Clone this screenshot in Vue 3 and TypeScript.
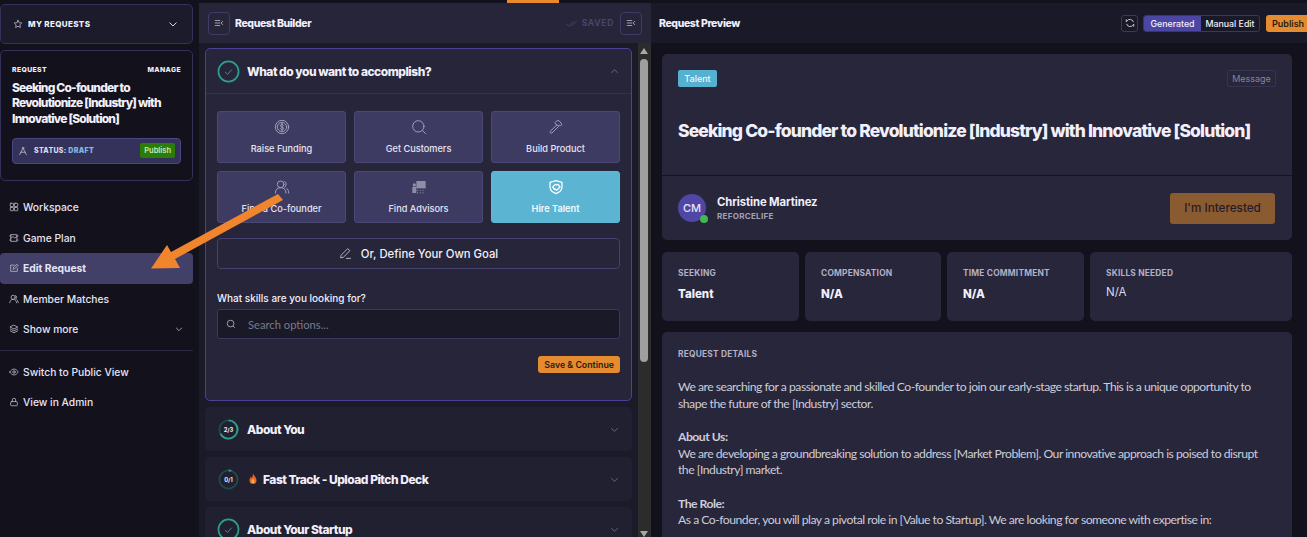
<script setup lang="ts">
const goals = [
  { label: 'Raise Funding', icon: 'dollar' },
  { label: 'Get Customers', icon: 'search' },
  { label: 'Build Product', icon: 'hammer' },
  { label: 'Find a Co-founder', icon: 'users' },
  { label: 'Find Advisors', icon: 'board' },
  { label: 'Hire Talent', icon: 'shake', active: true },
];

const navTop = [
  { label: 'Workspace', icon: 'grid' },
  { label: 'Game Plan', icon: 'map' },
  { label: 'Edit Request', icon: 'edit', active: true },
  { label: 'Member Matches', icon: 'user' },
  { label: 'Show more', icon: 'layers', more: true },
];

const navBottom = [
  { label: 'Switch to Public View', icon: 'eye' },
  { label: 'View in Admin', icon: 'lock' },
];

const stats = [
  { label: 'SEEKING', value: 'Talent' },
  { label: 'COMPENSATION', value: 'N/A' },
  { label: 'TIME COMMITMENT', value: 'N/A' },
  { label: 'SKILLS NEEDED', value: 'N/A', plain: true },
];

const circumference = 2 * Math.PI * 9.5;
function ringDash(done: number, total: number) {
  return `${(done / total) * circumference} ${circumference}`;
}
</script>

<template>
  <div class="app">
    <div class="top-mark"></div>

    <aside class="sidebar">
      <div class="my-requests">
        <svg class="ico star" viewBox="0 0 24 24"><path d="M12 3l2.8 5.8 6.2.9-4.5 4.4 1.1 6.3L12 17.4l-5.6 3 1.1-6.3L3 9.700l6.200-.9z" /></svg>
        <span>MY REQUESTS</span>
        <svg class="chev-lg" viewBox="0 0 24 24"><path d="M5 9l7 7 7-7" /></svg>
      </div>

      <div class="request-box">
        <div class="request-top"><span>REQUEST</span><span>MANAGE</span></div>
        <div class="request-title">Seeking Co-founder to Revolutionize [Industry] with Innovative [Solution]</div>
        <div class="status">
          <svg class="ico status-ico" viewBox="0 0 24 24"><circle cx="12" cy="5" r="2" /><path d="M11 7L4 21M13 7l7 14M6 15h12" /></svg>
          <span class="status-text">STATUS: <b>DRAFT</b></span>
          <span class="publish-small">Publish</span>
        </div>
      </div>

      <nav class="nav">
        <div v-for="item in navTop" :key="item.label" class="nav-item" :class="{ active: item.active }">
          <svg class="ico" viewBox="0 0 24 24">
            <template v-if="item.icon === 'grid'">
              <rect x="3" y="3" width="8" height="8" rx="1.500" /><rect x="13" y="3" width="8" height="8" rx="1.500" /><rect x="3" y="13" width="8" height="8" rx="1.500" /><rect x="13" y="13" width="8" height="8" rx="1.500" />
            </template>
            <template v-else-if="item.icon === 'map'">
              <path d="M5 4h14v16H5zM2 7h3M2 17h3M19 7h3M19 17h3M5 12l5-3 4 3 5-3" />
            </template>
            <template v-else-if="item.icon === 'edit'">
              <path d="M20 13v7H4V5h8M10 14l1-4 8-7 3 3-8 7z" />
            </template>
            <template v-else-if="item.icon === 'user'">
              <circle cx="10" cy="8" r="5" /><path d="M2 21c0-5 3-8 8-8s8 3 8 8M16 3.500c3 1 3 7 0 9M19 14c2 1 3 4 3 7" />
            </template>
            <template v-else>
              <path d="M12 3l9 4.500-9 4.500-9-4.500zM3 12l9 4.500 9-4.500M3 16.500l9 4.500 9-4.500" />
            </template>
          </svg>
          <span>{{ item.label }}</span>
          <svg v-if="item.more" class="chev-nav" viewBox="0 0 24 24"><path d="M5 9l7 7 7-7" /></svg>
        </div>
        <div class="nav-sep"></div>
        <div v-for="item in navBottom" :key="item.label" class="nav-item">
          <svg class="ico" viewBox="0 0 24 24">
            <template v-if="item.icon === 'eye'">
              <path d="M2 12c3-5 6-7 10-7s7 2 10 7c-3 5-6 7-10 7s-7-2-10-7z" /><circle cx="12" cy="12" r="3" />
            </template>
            <template v-else>
              <rect x="4" y="11" width="16" height="10" rx="2" /><path d="M8 11V7a4 4 0 0 1 8 0v4" />
            </template>
          </svg>
          <span>{{ item.label }}</span>
        </div>
      </nav>
    </aside>

    <section class="builder">
      <header class="builder-head">
        <span class="square-btn">
          <svg class="ico" viewBox="0 0 24 24"><path d="M3 6h11M3 12h11M3 18h11M21 8l-4 4 4 4" /></svg>
        </span>
        <span class="head-title">Request Builder</span>
        <span class="saved">
          <svg class="saved-ico" viewBox="0 0 24 24"><path d="M1 13l5 5L17 7M12 18L23 7" /></svg>
          SAVED
        </span>
        <span class="square-btn">
          <svg class="ico" viewBox="0 0 24 24"><path d="M3 6h11M3 12h11M3 18h11M21 8l-4 4 4 4" /></svg>
        </span>
      </header>

      <div class="builder-body">
        <div class="builder-scroll">
          <div class="acc open">
            <div class="acc-head first">
              <svg class="ring" viewBox="0 0 24 24">
                <circle cx="12" cy="12" r="10.500" class="ring-full" />
                <path d="M8.500 12.500l2.500 2.500 4.500-5" class="ring-check" />
              </svg>
              <span class="acc-title">What do you want to accomplish?</span>
              <svg class="chev-acc" viewBox="0 0 24 24"><path d="M5 15l7-7 7 7" /></svg>
            </div>
            <div class="acc-body">
              <div class="goals">
                <div v-for="goal in goals" :key="goal.label" class="goal" :class="{ active: goal.active }">
                  <svg class="goal-ico" viewBox="0 0 24 24">
                    <template v-if="goal.icon === 'dollar'">
                      <circle cx="12" cy="12" r="10" /><circle cx="12" cy="12" r="7" /><path d="M14.500 9.500c-.5-1-1.500-1.500-2.500-1.500-1.500 0-2.500.8-2.500 2s1 1.700 2.500 2 2.500.8 2.500 2-1 2-2.500 2c-1 0-2-.5-2.500-1.500M12 6.500v11" />
                    </template>
                    <template v-else-if="goal.icon === 'search'">
                      <circle cx="11" cy="11" r="8.500" /><path d="M17.500 17.500L22 22" />
                    </template>
                    <template v-else-if="goal.icon === 'hammer'">
                      <path d="M13 9L3.500 18.500a1.800 1.800 0 0 0 2.500 2.500L15.500 11.500M11 5l3-3 3 1 4 5-2 2-2-1-1 2-5-4z" />
                    </template>
                    <template v-else-if="goal.icon === 'users'">
                      <circle cx="10" cy="8" r="5" /><path d="M2 21c0-5 3-8 8-8s8 3 8 8M16 3.500c3 1 3 7 0 9M19 14c2 1 3 4 3 7" />
                    </template>
                    <template v-else-if="goal.icon === 'board'">
                      <rect class="fill" x="8" y="3" width="14" height="11" /><circle class="fill" cx="5" cy="9" r="2.500" /><rect class="fill" x="2" y="12" width="6" height="9" />
                      <path class="dots" d="M10 17v.5M14 17v.5M18 17v.5M10 20.500v.5M14 20.500v.5M18 20.500v.5" />
                    </template>
                    <template v-else>
                      <path d="M12 2.500l9 2.500v7c0 5-4 8-9 10-5-2-9-5-9-10V5z" /><path d="M7 12l4-4 2 1 2-1 3 4-5 5-2-2-1 1z" />
                    </template>
                  </svg>
                  <span>{{ goal.label }}</span>
                </div>
              </div>
              <div class="define">
                <svg class="define-ico" viewBox="0 0 24 24"><path d="M3 20l1-5L16 3l4 4L8 19zM13 21h9" /></svg>
                Or, Define Your Own Goal
              </div>
              <div class="skills-label">What skills are you looking for?</div>
              <div class="search">
                <svg class="search-ico" viewBox="0 0 24 24"><circle cx="11" cy="11" r="8" /><path d="M17 17l4 4" /></svg>
                <span>Search options...</span>
              </div>
              <div class="save-row"><span class="save-btn">Save &amp; Continue</span></div>
            </div>
          </div>

          <div class="acc">
            <div class="acc-head">
              <svg class="ring" viewBox="0 0 24 24">
                <circle cx="12" cy="12" r="9.500" class="ring-track" />
                <circle cx="12" cy="12" r="9.500" class="ring-value" :stroke-dasharray="ringDash(2, 3)" transform="rotate(-90 12 12)" />
                <text x="12" y="14.300" class="ring-text">2/3</text>
              </svg>
              <span class="acc-title">About You</span>
              <svg class="chev-acc" viewBox="0 0 24 24"><path d="M5 9l7 7 7-7" /></svg>
            </div>
          </div>
          <div class="acc">
            <div class="acc-head">
              <svg class="ring" viewBox="0 0 24 24">
                <circle cx="12" cy="12" r="9.500" class="ring-track" />
                <circle cx="12" cy="12" r="9.500" class="ring-value" :stroke-dasharray="`3 ${circumference}`" transform="rotate(-90 12 12)" />
                <text x="12" y="14.300" class="ring-text">0/1</text>
              </svg>
              <svg class="flame" viewBox="0 0 24 24">
                <path d="M12 1c1 4 7 7 7 14a7 7 0 0 1-14 0c0-4 2-6 3-8 1 2 1 3 2 3 1-3 2-6 2-9z" fill="#e8672a" />
                <path d="M12 11c1 2 3 3 3 6a3 3 0 0 1-6 0c0-2 2-4 3-6z" fill="#f6b24a" />
              </svg>
              <span class="acc-title">Fast Track - Upload Pitch Deck</span>
              <svg class="chev-acc" viewBox="0 0 24 24"><path d="M5 9l7 7 7-7" /></svg>
            </div>
          </div>
          <div class="acc">
            <div class="acc-head">
              <svg class="ring" viewBox="0 0 24 24">
                <circle cx="12" cy="12" r="10.500" class="ring-full" />
                <path d="M8.500 12.500l2.500 2.500 4.500-5" class="ring-check" />
              </svg>
              <span class="acc-title">About Your Startup</span>
              <svg class="chev-acc" viewBox="0 0 24 24"><path d="M5 9l7 7 7-7" /></svg>
            </div>
          </div>
        </div>

        <div class="scrollbar">
          <span class="arrow-up"></span>
          <span class="thumb"></span>
          <span class="arrow-down"></span>
        </div>
      </div>
    </section>

    <section class="preview">
      <header class="preview-head">
        <span class="head-title">Request Preview</span>
        <span class="refresh">
          <svg class="ico" viewBox="0 0 24 24"><path d="M20 9a8.500 8.500 0 0 0-15-2L3 9V4M4 15a8.500 8.500 0 0 0 15 2l2-2v5" /></svg>
        </span>
        <span class="segment">
          <span class="seg on">Generated</span>
          <span class="seg">Manual Edit</span>
        </span>
        <span class="publish">Publish</span>
      </header>

      <div class="preview-body">
        <div class="preview-scroll">
          <div class="card hero">
            <div class="hero-main">
              <div class="hero-top">
                <span class="chip">Talent</span>
                <span class="message">Message</span>
              </div>
              <h1 class="hero-title">Seeking Co-founder to Revolutionize [Industry] with Innovative [Solution]</h1>
            </div>
            <div class="hero-foot">
              <span class="avatar">CM<i class="online"></i></span>
              <span class="who">
                <span class="who-name">Christine Martinez</span>
                <span class="who-org">REFORCELIFE</span>
              </span>
              <span class="interested">I'm Interested</span>
            </div>
          </div>

          <div class="stats">
            <div v-for="stat in stats" :key="stat.label" class="card stat">
              <span class="stat-label">{{ stat.label }}</span>
              <span class="stat-value" :class="{ plain: stat.plain }">{{ stat.value }}</span>
            </div>
          </div>

          <div class="card details">
            <div class="stat-label">REQUEST DETAILS</div>
            <div class="details-text">
              <p>We are searching for a passionate and skilled Co-founder to join our early-stage startup. This is a unique opportunity to shape the future of the [Industry] sector.</p>
              <p><b>About Us:</b><br />We are developing a groundbreaking solution to address [Market Problem]. Our innovative approach is poised to disrupt the [Industry] market.</p>
              <p><b>The Role:</b><br />As a Co-founder, you will play a pivotal role in [Value to Startup]. We are looking for someone with expertise in:</p>
            </div>
          </div>
        </div>
      </div>
    </section>

    <svg class="pointer" viewBox="0 0 1307 537">
      <polygon points="278,194 283,200 175,259 180,268 151,268.500 167,245 171,252" fill="#f0852d" />
    </svg>
  </div>
</template>

<style>
html,
body {
  margin: 0;
  background: #12111c;
}
</style>

<style scoped>
.app {
  position: relative;
  display: flex;
  width: 1307px;
  height: 537px;
  overflow: hidden;
  background: #12111c;
  color: #f1effa;
  font-family: Inter, "Open Sans", sans-serif;
}

.top-mark {
  position: absolute;
  left: 507px;
  top: 0;
  width: 52px;
  height: 3px;
  background: #e98a2f;
}

.pointer {
  position: absolute;
  inset: 0;
  width: 1307px;
  height: 537px;
  pointer-events: none;
}

.ico {
  width: 10px;
  height: 10px;
  flex: none;
  fill: none;
  stroke: #b4b2c6;
  stroke-width: 2;
  stroke-linecap: round;
  stroke-linejoin: round;
}

/* sidebar */
.sidebar {
  width: 193px;
  flex: none;
  margin-right: 6px;
  padding-top: 4px;
  box-sizing: border-box;
}

.my-requests {
  display: flex;
  align-items: center;
  height: 40px;
  padding: 0 13px 0 12px;
  box-sizing: border-box;
  border: 1px solid #33315a;
  border-radius: 5px;
  background: #1c1b2c;
  font-size: 8px;
  font-weight: 800;
  letter-spacing: 0.35px;
}

.star {
  width: 10px;
  height: 10px;
  margin-right: 5px;
}

.chev-lg {
  width: 12px;
  height: 12px;
  margin-left: auto;
  fill: none;
  stroke: #d6d4e4;
  stroke-width: 2;
}

.request-box {
  height: 131px;
  margin-top: 6px;
  padding: 14px 11px 0;
  box-sizing: border-box;
  border: 1px solid #33315a;
  border-radius: 5px;
}

.request-top {
  display: flex;
  justify-content: space-between;
  font-size: 6.800px;
  font-weight: 800;
  letter-spacing: 0.4px;
}

.request-title {
  margin-top: 6px;
  font-size: 12px;
  font-weight: 800;
  line-height: 15.300px;
  letter-spacing: -0.8px;
}

.status {
  display: flex;
  align-items: center;
  height: 26px;
  margin-top: 12px;
  padding: 0 5px;
  box-sizing: border-box;
  border: 1px solid #4a4880;
  border-radius: 4px;
  background: #34325a;
}

.status-ico {
  margin-right: 6px;
}

.status-text {
  font-size: 7px;
  font-weight: 800;
  letter-spacing: 0.3px;
  color: #dcdaea;
}

.status-text b {
  color: #7fb6e0;
}

.publish-small {
  margin-left: auto;
  padding: 2px 4px;
  border-radius: 2px;
  background: #2b7d0a;
  color: #c9e8b8;
  font-size: 7.500px;
  font-weight: 600;
  line-height: 11px;
}

.nav {
  margin-top: 11px;
}

.nav-item {
  display: flex;
  align-items: center;
  height: 30.500px;
  padding: 0 9px;
  box-sizing: border-box;
  border-radius: 4px;
  color: #e6e4f2;
  font-size: 10.300px;
  font-weight: 500;
}

.nav-item .ico {
  margin-right: 4px;
}

.nav-item.active {
  background: #423f69;
  font-weight: 700;
}

.chev-nav {
  width: 10px;
  height: 10px;
  margin-left: auto;
  fill: none;
  stroke: #b4b2c6;
  stroke-width: 2;
}

.nav-sep {
  height: 1px;
  margin: 5px 0 6px;
  background: #2a2840;
}

/* builder */
.builder {
  width: 452px;
  flex: none;
  margin-top: 3px;
  display: flex;
  flex-direction: column;
  background: #1b1a29;
}

.builder-head {
  display: flex;
  align-items: center;
  height: 40px;
  flex: none;
  padding: 0 9px;
  box-sizing: border-box;
  background: #26253a;
}

.square-btn {
  display: flex;
  align-items: center;
  justify-content: center;
  width: 22px;
  height: 23px;
  box-sizing: border-box;
  border: 1px solid #3e3c66;
  border-radius: 4px;
}

.head-title {
  margin-left: 5px;
  font-size: 10.500px;
  font-weight: 800;
  letter-spacing: -0.4px;
}

.saved {
  display: flex;
  align-items: center;
  gap: 5px;
  margin-left: auto;
  margin-right: 6px;
  color: #47466f;
  font-size: 8.500px;
  font-weight: 700;
  letter-spacing: 0.7px;
}

.saved-ico {
  width: 11px;
  height: 11px;
  fill: none;
  stroke: #47466f;
  stroke-width: 2;
}

.builder-body {
  display: flex;
  flex: 1;
  min-height: 0;
  padding-top: 5px;
  box-sizing: border-box;
}

.builder-scroll {
  width: 427px;
  margin-left: 6px;
  display: flex;
  flex-direction: column;
  gap: 6px;
  flex: none;
}

.scrollbar {
  position: relative;
  width: 13px;
  margin-left: auto;
  margin-top: -5px;
  background: #2c2c2c;
}

.thumb {
  position: absolute;
  left: 2px;
  top: 16px;
  width: 8px;
  height: 303px;
  border-radius: 4px;
  background: #9f9f9f;
}

.arrow-up,
.arrow-down {
  position: absolute;
  left: 2px;
  width: 0;
  height: 0;
  border-left: 4.500px solid transparent;
  border-right: 4.500px solid transparent;
}

.arrow-up {
  top: 5px;
  border-bottom: 6px solid #a8a8a8;
}

.arrow-down {
  bottom: 0;
  border-top: 6px solid #a8a8a8;
}

.acc {
  flex: none;
  height: 44px;
  border-radius: 5px;
  background: #212031;
}

.acc.open {
  height: 353px;
  box-sizing: border-box;
  border: 1px solid #4d4196;
  background: #26253a;
}

.acc-head {
  display: flex;
  align-items: center;
  height: 44px;
  padding: 0 12px;
  box-sizing: border-box;
}

.acc-head.first {
  height: 45px;
  padding: 0 11px;
  border-bottom: 1px solid #34324f;
}

.ring {
  width: 23px;
  height: 23px;
  flex: none;
  margin-right: 7px;
  fill: none;
}

.ring-full {
  stroke: #2f9d88;
  stroke-width: 1.800;
}

.ring-check {
  stroke: #2f9d88;
  stroke-width: 1;
}

.ring-track {
  stroke: #1f4a48;
  stroke-width: 2;
}

.ring-value {
  stroke: #2f9d88;
  stroke-width: 2;
}

.ring-text {
  fill: #ececf4;
  font-size: 6px;
  font-weight: 700;
  text-anchor: middle;
}

.flame {
  width: 12px;
  height: 12px;
  margin-right: 4px;
}

.acc-title {
  font-size: 12px;
  font-weight: 800;
  letter-spacing: -0.5px;
}

.chev-acc {
  width: 11px;
  height: 11px;
  margin-left: auto;
  fill: none;
  stroke: #6d6b85;
  stroke-width: 2;
}

.acc-body {
  padding: 17px 11px 0;
}

.goals {
  display: grid;
  grid-template-columns: repeat(3, 1fr);
  gap: 8px;
}

.goal {
  display: flex;
  flex-direction: column;
  align-items: center;
  height: 52px;
  padding-top: 7px;
  box-sizing: border-box;
  border: 1px solid #4b4878;
  border-radius: 3px;
  background: #3e3b62;
  color: #e6e4f2;
  font-size: 9.200px;
  font-weight: 500;
}

.goal.active {
  border-color: #5fb8d4;
  background: #5ab4d2;
  color: #f4fbff;
  font-weight: 600;
}

.goal-ico {
  width: 16px;
  height: 16px;
  margin-bottom: 8px;
  fill: none;
  stroke: #a8a6bd;
  stroke-width: 1.400;
  stroke-linecap: round;
  stroke-linejoin: round;
}

.goal.active .goal-ico {
  stroke: #fff;
  stroke-width: 1.900;
}

.goal-ico .fill {
  fill: #8f8da8;
  stroke: none;
}

.goal-ico .dots {
  stroke: #8f8da8;
}

.define {
  display: flex;
  align-items: center;
  justify-content: center;
  gap: 9px;
  height: 31px;
  margin-top: 15px;
  box-sizing: border-box;
  border: 1px solid #45426f;
  border-radius: 4px;
  font-size: 11.300px;
  font-weight: 500;
}

.define-ico {
  width: 13px;
  height: 13px;
  fill: none;
  stroke: #cfcde0;
  stroke-width: 1.500;
}

.skills-label {
  margin-top: 22px;
  font-size: 10px;
  font-weight: 500;
  line-height: 14px;
}

.search {
  display: flex;
  align-items: center;
  height: 30px;
  margin-top: 4px;
  padding: 0 8px;
  box-sizing: border-box;
  border: 1px solid #3a3860;
  border-radius: 3px;
  background: #1a1928;
  color: #7b7a8b;
  font-family: Lato, sans-serif;
  font-size: 11.200px;
}

.search-ico {
  width: 10px;
  height: 10px;
  margin-right: 12px;
  fill: none;
  stroke: #b4b2c6;
  stroke-width: 2;
}

.save-row {
  display: flex;
  justify-content: flex-end;
  margin-top: 17px;
}

.save-btn {
  padding: 0 6px;
  height: 17px;
  border-radius: 3px;
  background: #e58b30;
  color: #2a1d12;
  font-size: 8.800px;
  font-weight: 600;
  line-height: 17px;
}

/* preview */
.preview {
  flex: 1;
  min-width: 0;
  margin-top: 3px;
  display: flex;
  flex-direction: column;
}

.preview-head {
  display: flex;
  align-items: center;
  height: 40px;
  flex: none;
  padding-left: 3px;
  background: #1a1928;
}

.preview-head .head-title {
  margin-left: 5px;
  margin-right: auto;
}

.refresh {
  display: flex;
  align-items: center;
  justify-content: center;
  width: 17px;
  height: 17px;
  box-sizing: border-box;
  margin-right: 5px;
  border: 1px solid #3a3860;
  border-radius: 3px;
}

.refresh .ico {
  stroke: #e6e4f2;
}

.segment {
  display: flex;
  height: 17px;
  width: 117px;
  margin-right: 6px;
  box-sizing: border-box;
  border: 1px solid #3a3860;
  border-radius: 3px;
  overflow: hidden;
  font-size: 8.800px;
  font-weight: 500;
  line-height: 15px;
}

.seg {
  flex: 1;
  text-align: center;
}

.seg.on {
  flex: none;
  width: 57px;
  background: #4c46a3;
}

.publish {
  width: 41px;
  height: 17px;
  flex: none;
  padding-left: 6px;
  box-sizing: border-box;
  border-radius: 3px 0 0 3px;
  background: #e58b30;
  color: #2a1d12;
  font-size: 9px;
  font-weight: 600;
  line-height: 17px;
}

.preview-body {
  display: flex;
  flex: 1;
  min-height: 0;
  padding: 11px 0 0 11px;
}

.preview-scroll {
  width: 630px;
}

.card {
  border-radius: 5px;
  background: #27263b;
}

.hero-main {
  height: 122px;
  padding: 16px;
  box-sizing: border-box;
  border-bottom: 1px solid #14131f;
}

.hero-top {
  display: flex;
  justify-content: space-between;
  align-items: center;
}

.chip {
  width: 39px;
  height: 17px;
  border-radius: 2px;
  background: #56b0cf;
  color: #eef9fd;
  font-size: 9px;
  font-weight: 500;
  line-height: 17px;
  text-align: center;
}

.message {
  width: 49px;
  height: 17px;
  box-sizing: border-box;
  border: 1px solid #36354f;
  border-radius: 2px;
  color: #85849a;
  font-size: 9px;
  line-height: 15px;
  text-align: center;
}

.hero-title {
  margin: 33px 0 0;
  font-size: 17.500px;
  font-weight: 800;
  line-height: 22px;
  letter-spacing: -0.86px;
  white-space: nowrap;
}

.hero-foot {
  display: flex;
  align-items: center;
  height: 64px;
  padding: 0 17px 0 16px;
}

.avatar {
  position: relative;
  display: flex;
  align-items: center;
  justify-content: center;
  width: 28px;
  height: 28px;
  flex: none;
  border-radius: 50%;
  background: #4f46a5;
  color: #e6e4f8;
  font-size: 11px;
  font-weight: 500;
}

.online {
  position: absolute;
  right: -2px;
  bottom: -1px;
  width: 8px;
  height: 8px;
  border-radius: 50%;
  background: #3fb950;
}

.who {
  display: flex;
  flex-direction: column;
  gap: 2px;
  margin-left: 11px;
}

.who-name {
  font-size: 11.300px;
  font-weight: 700;
  letter-spacing: -0.1px;
}

.who-org {
  color: #a3a1b5;
  font-size: 8px;
  font-weight: 700;
  letter-spacing: 0.3px;
}

.interested {
  width: 105px;
  height: 31px;
  margin-left: auto;
  border-radius: 3px;
  background: #8a5a30;
  color: #241c28;
  font-size: 11.700px;
  font-weight: 500;
  line-height: 31px;
  text-align: center;
}

.stats {
  display: grid;
  grid-template-columns: 137px 136px 137px 1fr;
  gap: 6px;
  margin-top: 12px;
}

.stat {
  display: flex;
  flex-direction: column;
  height: 69px;
  padding: 16px;
  box-sizing: border-box;
}

.stat-label {
  color: #b3b1c5;
  font-size: 8.400px;
  font-weight: 700;
  letter-spacing: 0.2px;
  line-height: 10px;
}

.stat-value {
  margin-top: 8.500px;
  font-size: 11.500px;
  font-weight: 800;
  line-height: 14px;
}

.stat-value.plain {
  margin-top: 7px;
  color: #dcdaea;
  font-weight: 400;
}

.details {
  margin-top: 11px;
  height: 240px;
  padding: 17px 16px;
  box-sizing: border-box;
}

.details-text {
  margin-top: 20px;
  color: #cdccd8;
  font-family: Lato, sans-serif;
  font-size: 12.200px;
  letter-spacing: -0.5px;
  line-height: 16.650px;
}

.details-text p {
  margin: 0 0 16.650px;
}

.details-text b {
  font-weight: 700;
}
</style>
